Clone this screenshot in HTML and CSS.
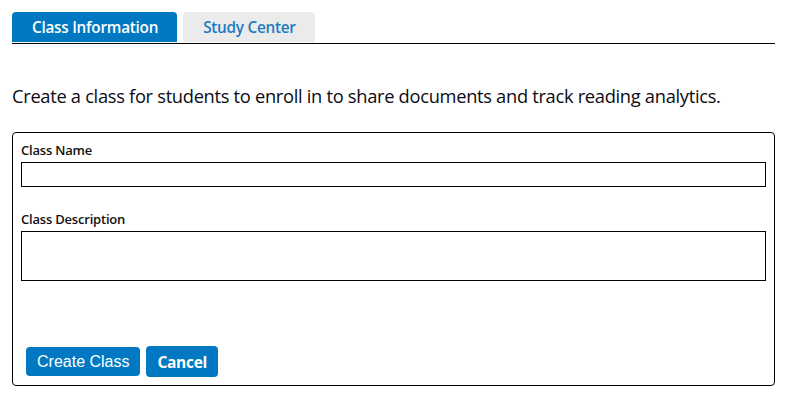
FILE: index.html
```html
<!DOCTYPE html>
<html lang="en">
<head>
  <meta charset="UTF-8">
  <title>Create Class</title>
  <link rel="stylesheet" href="styles.css">
</head>
<body>
  <div class="page">
    <div class="tabs">
      <div class="tab active">Class Information</div>
      <div class="tab">Study Center</div>
    </div>

    <p class="intro">Create a class for students to enroll in to share documents and track reading analytics.</p>

    <!-- Class form -->
    <form class="class-form">
      <label for="className">Class Name</label>
      <input type="text" id="className">

      <label for="classDesc">Class Description</label>
      <textarea id="classDesc"></textarea>

      <div class="actions">
        <button type="submit" class="btn-create">Create Class</button>
        <button type="button" class="btn-cancel">Cancel</button>
      </div>
    </form>
  </div>
</body>
</html>
```

FILE: styles.css
```css
body {
  margin: 0;
  font-family: "Open Sans", "Noto Sans", sans-serif;
  background: #fff;
  color: #111;
}

.page {
  padding: 12px 16px 0 12px;
}

.tabs {
  display: flex;
  gap: 6px;
  border-bottom: 1px solid #000;
  height: 31px;
}

.tab {
  height: 30px;
  padding: 0 19px 0 20px;
  display: flex;
  align-items: center;
  border-radius: 4px 4px 0 0;
  font-size: 15.3px;
  font-weight: 600;
  letter-spacing: -0.25px;
  background: #ebebeb;
  color: #1c7bc3;
}

.tab.active {
  background: #0079c2;
  color: #fff;
}

.intro {
  margin: 39px 0 24px 0;
  font-size: 18.3px;
  letter-spacing: -0.3px;
  color: #0b0b14;
}

.class-form {
  border: 1px solid #000;
  border-radius: 4px;
  padding: 8px;
  display: flex;
  flex-direction: column;
  height: 236px;
}

label {
  font-size: 13px;
  font-weight: 600;
  letter-spacing: -0.2px;
  margin-bottom: 3px;
}

input,
textarea {
  border: 1px solid #000;
  border-radius: 0;
  margin: 0;
  box-sizing: border-box;
  font-family: inherit;
}

input {
  height: 25px;
  margin-bottom: 23px;
}

textarea {
  height: 50px;
  resize: none;
}

.actions {
  margin-top: auto;
  display: flex;
  align-items: center;
  gap: 6px;
  padding-left: 5px;
}

button {
  background-color: #0079c2;
  color: #fff;
  border: none;
  border-radius: 4px;
  cursor: pointer;
}

.btn-create {
  height: 29px;
  padding: 0 11px;
  font-family: "Liberation Sans", Arial, sans-serif;
  font-size: 16px;
}

.btn-cancel {
  height: 31px;
  padding: 0 11px;
  font-family: "Open Sans", "Noto Sans", sans-serif;
  font-size: 15.5px;
  font-weight: 700;
  letter-spacing: -0.3px;
}
```
